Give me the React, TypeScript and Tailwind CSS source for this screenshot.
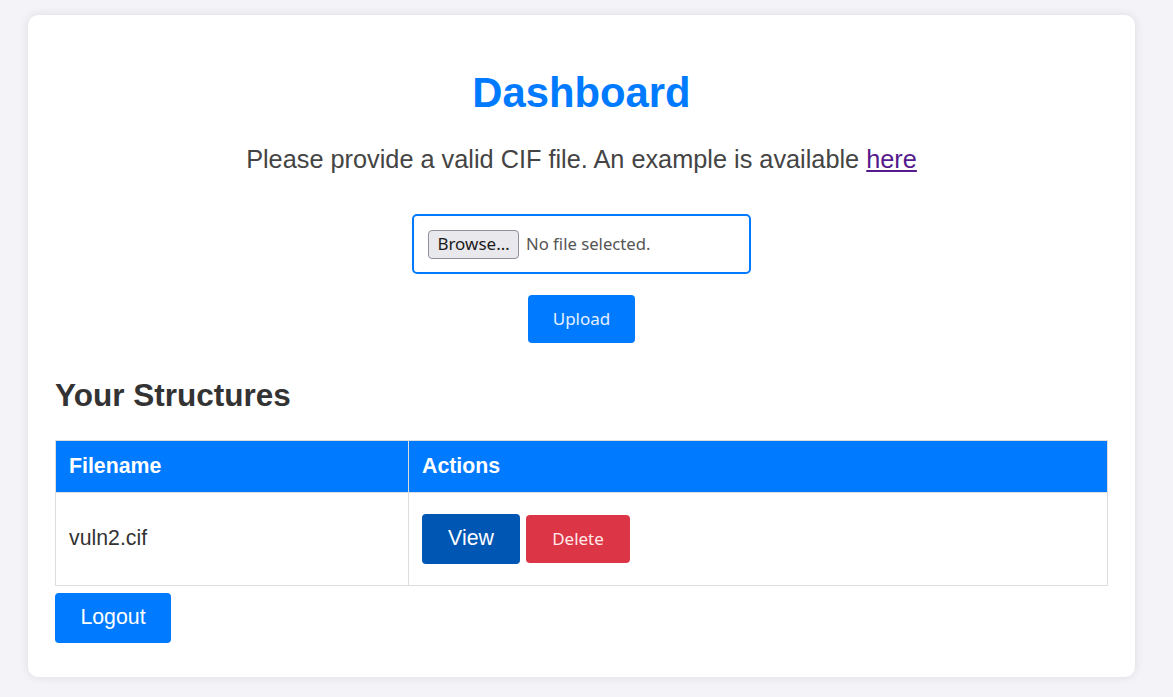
import React from "react";

export default function App() {
  const sans = { fontFamily: '"Liberation Sans", Arial, sans-serif' };
  return (
    <div className="min-h-[697px] w-full bg-[#f4f4f8] pt-[15px] pb-[20px]" style={sans}>
      <div className="ml-[28px] w-[1107px] rounded-[10px] bg-white px-[27px] pt-[55px] pb-[34px] shadow-[0_0_10px_rgba(0,0,0,0.1)] text-[#333]">
        <h1 className="text-center text-[41.8px] font-bold leading-[46px] text-[#007bff]">
          Dashboard
        </h1>
        <p className="mt-[30px] text-center text-[25.3px] leading-[26px] text-[#444]">
          Please provide a valid CIF file. An example is available{" "}
          <a href="#" className="text-[#551a8b] underline">here</a>
        </p>
        <div className="mt-[42px] flex justify-center">
          <div className="flex h-[60px] w-[339px] items-center rounded-[5px] border-2 border-[#007bff] bg-white pl-[14px] font-['Noto_Sans',sans-serif]">
            <span className="flex h-[29px] w-[91px] items-center justify-center rounded-[4px] border border-[#8f8f9d] bg-[#e9e9ed] text-[17px] text-[#1b1b1b]">
              Browse…
            </span>
            <span className="ml-[7px] text-[16.7px] text-[#555]">No file selected.</span>
          </div>
        </div>
        <div className="mt-[21px] flex justify-center">
          <button className="h-[48px] w-[107px] rounded-[4px] bg-[#007bff] text-[17px] text-[#e6f0ff] font-['Noto_Sans',sans-serif]">
            Upload
          </button>
        </div>
        <h2 className="mt-[34px] text-[31.5px] font-bold leading-[36px] text-[#333]">Your Structures</h2>
        <table className="mt-[27px] w-full border-collapse">
          <thead>
            <tr className="bg-[#007bff] text-white">
              <th className="h-[52px] w-[353px] border border-[#dddddd] px-[13px] text-left text-[21.3px] font-bold">Filename</th>
              <th className="h-[52px] border border-[#dddddd] px-[13px] text-left text-[21.3px] font-bold">Actions</th>
            </tr>
          </thead>
          <tbody>
            <tr>
              <td className="h-[93px] border border-[#dddddd] px-[13px] text-[21.3px] text-[#333]">vuln2.cif</td>
              <td className="h-[93px] border border-[#dddddd] px-[13px]">
                <div className="flex items-center gap-[6px]">
                  <button className="h-[50px] w-[98px] rounded-[4px] bg-[#0056b3] text-[21.3px] text-white">View</button>
                  <button className="h-[48px] w-[104px] rounded-[4px] bg-[#dc3545] text-[17px] text-[#ffe9ea] font-['Noto_Sans',sans-serif]">
                    Delete
                  </button>
                </div>
              </td>
            </tr>
          </tbody>
        </table>
        <button className="mt-[7px] h-[50px] w-[116px] rounded-[4px] bg-[#007bff] text-[21.3px] text-white">Logout</button>
      </div>
    </div>
  );
}
